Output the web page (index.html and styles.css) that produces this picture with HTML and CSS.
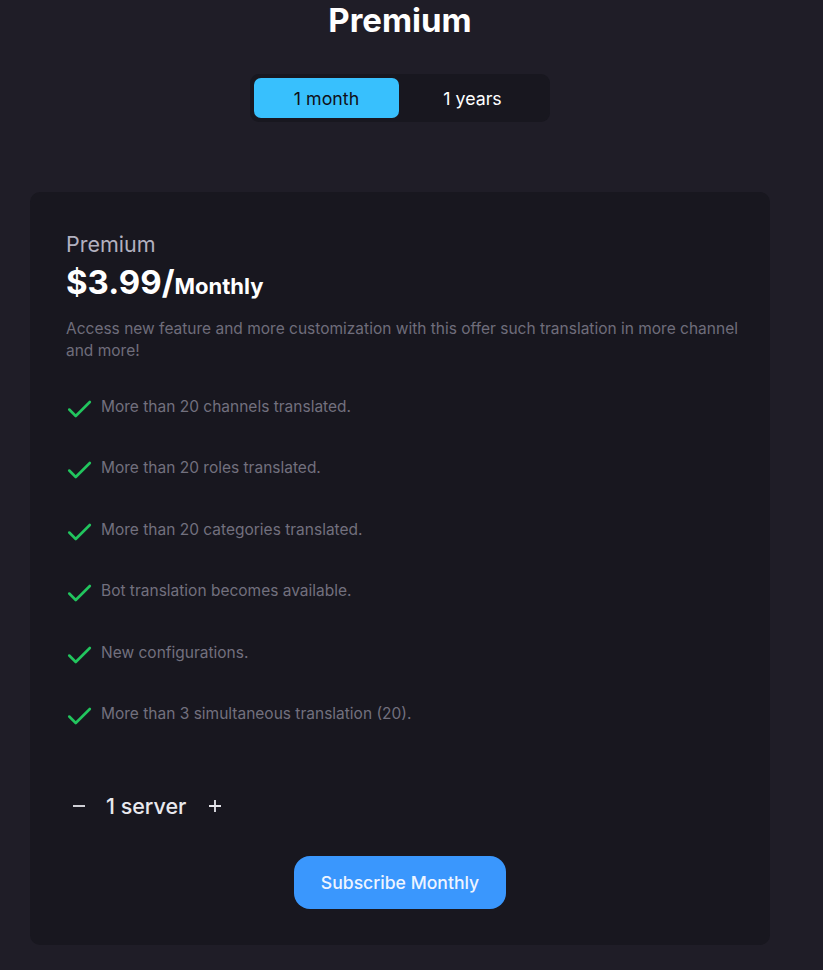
FILE: index.html
```html
<!DOCTYPE html>
<html>
<head>
<meta charset="utf-8">
<link rel="stylesheet" href="styles.css">
</head>
<body>
<main class="page">
  <h1 class="title">Premium</h1>
  <div class="toggle">
    <button class="tab active">1 month</button>
    <button class="tab">1 years</button>
  </div>
  <section class="card">
    <div class="plan-name">Premium</div>
    <div class="price"><span class="amount">$3.99/</span><span class="period">Monthly</span></div>
    <p class="desc">Access new feature and more customization with this offer such translation in more channel and more!</p>
    <ul class="features">
      <li><svg class="check" viewBox="0 0 24 24"><path d="M3 12.5l6 6L22 5.5"/></svg><span>More than 20 channels translated.</span></li>
      <li><svg class="check" viewBox="0 0 24 24"><path d="M3 12.5l6 6L22 5.5"/></svg><span>More than 20 roles translated.</span></li>
      <li><svg class="check" viewBox="0 0 24 24"><path d="M3 12.5l6 6L22 5.5"/></svg><span>More than 20 categories translated.</span></li>
      <li><svg class="check" viewBox="0 0 24 24"><path d="M3 12.5l6 6L22 5.5"/></svg><span>Bot translation becomes available.</span></li>
      <li><svg class="check" viewBox="0 0 24 24"><path d="M3 12.5l6 6L22 5.5"/></svg><span>New configurations.</span></li>
      <li><svg class="check" viewBox="0 0 24 24"><path d="M3 12.5l6 6L22 5.5"/></svg><span>More than 3 simultaneous translation (20).</span></li>
    </ul>
    <div class="counter">
      <button class="step"><svg viewBox="0 0 16 16"><path d="M2 8h12"/></svg></button>
      <span class="count">1 server</span>
      <button class="step"><svg viewBox="0 0 16 16"><path d="M2 8h12M8 2v12"/></svg></button>
    </div>
    <div class="actions">
      <button class="subscribe">Subscribe Monthly</button>
    </div>
  </section>
</main>
</body>
</html>
```

FILE: styles.css
```css
* { box-sizing: border-box; }
html, body { margin: 0; padding: 0; }
body {
  background: #1f1d27;
  font-family: Inter, "Noto Sans", sans-serif;
  color: #fff;
  min-height: 970px;
}
.page {
  width: 800px;
  display: flex;
  flex-direction: column;
  align-items: center;
}
.title {
  margin: 0;
  padding-top: 1px;
  font-size: 33px;
  font-weight: 700;
  line-height: 38px;
}
.toggle {
  margin-top: 35px;
  width: 300px;
  height: 48px;
  background: #18171f;
  border-radius: 9px;
  padding: 4px;
  display: flex;
}
.tab {
  flex: 0 0 145px;
  height: 40px;
  border: none;
  border-radius: 7px;
  background: transparent;
  color: #fff;
  font-family: inherit;
  font-size: 17.8px;
  padding: 0;
}
.tab.active { background: #38c0fd; color: #101018; }
.tab + .tab { flex: 1; }
.card {
  margin-top: 70px;
  width: 740px;
  background: #18171f;
  border-radius: 10px;
  padding: 39px 24px 36px 36px;
}
.plan-name {
  font-size: 21.5px;
  color: #b2b0bf;
  line-height: 26px;
}
.price {
  margin-top: 6px;
  line-height: 38px;
}
.amount { font-size: 33px; font-weight: 700; }
.period { font-size: 22px; font-weight: 700; }
.desc {
  margin: 11px 0 0;
  font-size: 15.5px;
  line-height: 22px;
  color: #6f6d7b;
}
.features {
  list-style: none;
  margin: 32px 0 0;
  padding: 0;
  display: flex;
  flex-direction: column;
  gap: 37.6px;
}
.features li {
  display: flex;
  align-items: center;
  height: 24px;
  font-size: 15.5px;
  color: #72707e;
}
.check {
  width: 26px;
  height: 26px;
  margin-right: 9px;
  margin-top: 5px;
  fill: none;
  stroke: #22c55e;
  stroke-width: 2.4;
  stroke-linecap: round;
  stroke-linejoin: round;
}
.counter {
  margin-top: 65px;
  display: flex;
  align-items: center;
  padding-left: 5px;
  height: 30px;
}
.step {
  background: none;
  border: none;
  padding: 0;
  width: 16px;
  height: 16px;
  display: flex;
}
.step svg {
  width: 16px;
  height: 16px;
  fill: none;
  stroke: #e5e5ea;
  stroke-width: 1.8;
}
.count {
  font-size: 21.5px;
  font-weight: 500;
  color: #e9e9ee;
  margin: 0 21px 0 19px;
}
.actions {
  margin-top: 35px;
  margin-right: 12px;
  display: flex;
  justify-content: center;
}
.subscribe {
  width: 212px;
  height: 53px;
  border: none;
  border-radius: 16px;
  background: #3a97fd;
  color: #eef4ff;
  font-family: inherit;
  font-size: 17.6px;
  font-weight: 500;
}
```
